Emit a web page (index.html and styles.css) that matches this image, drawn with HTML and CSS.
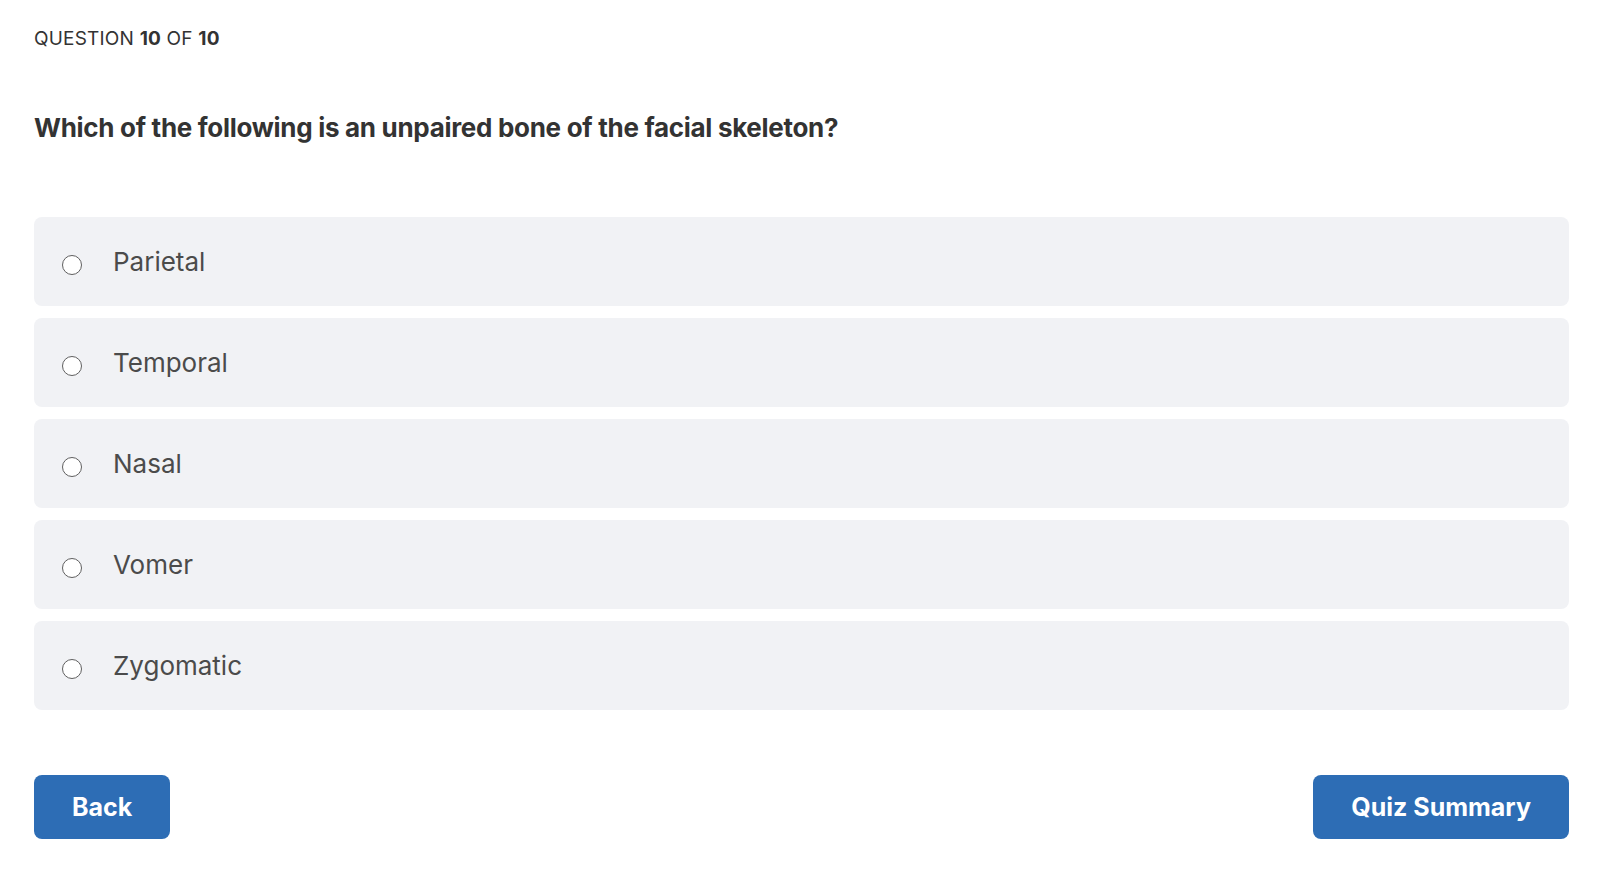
FILE: index.html
```html
<!DOCTYPE html>
<html lang="en">
<head>
    <meta charset="UTF-8">
    <meta name="viewport" content="width=device-width, initial-scale=1.0">
    <title>Quiz</title>
    <link rel="stylesheet" href="styles.css">
</head>
<body>
    <div class="quiz">
        <div class="counter">QUESTION <b>10</b> OF <b>10</b></div>

        <h2 class="question">Which of the following is an unpaired bone of the facial skeleton?</h2>

        <ul class="answers">
            <li class="answer"><label><input type="radio" name="answer"><span>Parietal</span></label></li>
            <li class="answer"><label><input type="radio" name="answer"><span>Temporal</span></label></li>
            <li class="answer"><label><input type="radio" name="answer"><span>Nasal</span></label></li>
            <li class="answer"><label><input type="radio" name="answer"><span>Vomer</span></label></li>
            <li class="answer"><label><input type="radio" name="answer"><span>Zygomatic</span></label></li>
        </ul>

        <div class="actions">
            <button class="btn">Back</button>
            <button class="btn">Quiz Summary</button>
        </div>
    </div>
</body>
</html>
```

FILE: styles.css
```css
body {
    margin: 0;
    background: #fff;
    font-family: Inter, 'Liberation Sans', sans-serif;
    color: #333;
}

.quiz {
    padding: 25px 37px 0 34px;
}

.counter {
    font-size: 19px;
    line-height: 28px;
    letter-spacing: 0.2px;
    color: #333;
}

.counter b {
    font-weight: 700;
}

.question {
    margin: 59px 0 0;
    font-size: 26px;
    line-height: 32px;
    font-weight: 700;
    color: #333;
    letter-spacing: -0.3px;
}

.answers {
    list-style: none;
    margin: 73px 0 0;
    padding: 0;
    display: flex;
    flex-direction: column;
    gap: 12px;
}

.answer {
    background: #f1f2f5;
    border-radius: 8px;
    height: 89px;
}

.answer label {
    display: flex;
    align-items: center;
    height: 100%;
    padding-left: 28px;
    cursor: pointer;
}

.answer input {
    appearance: none;
    width: 20px;
    height: 20px;
    margin: 6px 0 0;
    border: 1.5px solid #5f5f5f;
    border-radius: 50%;
    background: #fff;
}

.answer span {
    margin-left: 31px;
    font-size: 26px;
    color: #4b4b4b;
}

.actions {
    display: flex;
    justify-content: space-between;
    margin-top: 65px;
}

.btn {
    height: 64px;
    padding: 0 38px;
    background: #2d6db5;
    color: #fff;
    border: none;
    border-radius: 8px;
    font-family: Inter, 'Liberation Sans', sans-serif;
    font-size: 25px;
    font-weight: 700;
    cursor: pointer;
}
```
